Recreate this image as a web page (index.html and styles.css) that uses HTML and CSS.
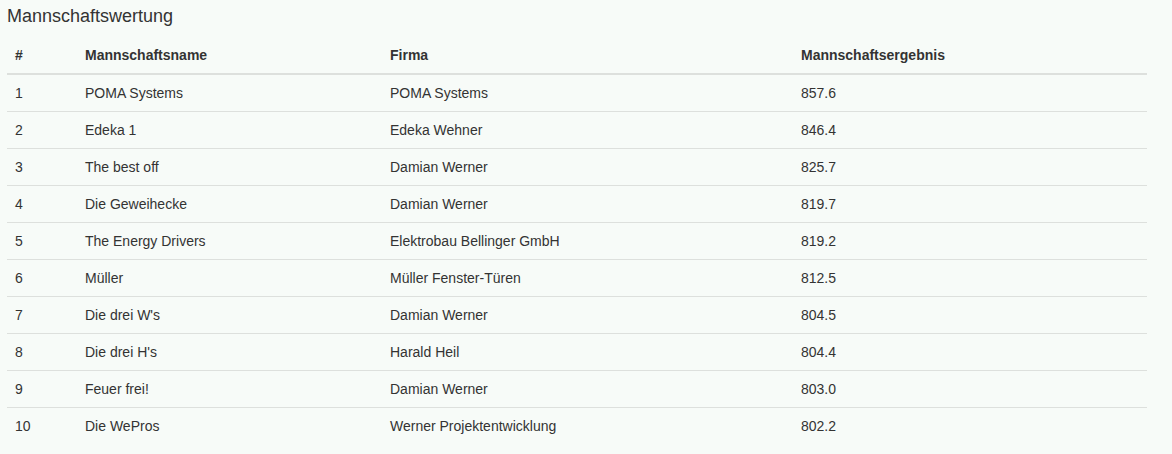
FILE: index.html
```html
<!DOCTYPE html>
<html lang="de">
<head>
<meta charset="utf-8">
<title>Mannschaftswertung</title>
<link rel="stylesheet" href="styles.css">
</head>
<body>
<div class="page">
  <h4 class="title">Mannschaftswertung</h4>
  <table class="table">
    <colgroup>
      <col class="c-rank"><col class="c-name"><col class="c-firm"><col class="c-score">
    </colgroup>
    <thead>
      <tr><th>#</th><th>Mannschaftsname</th><th>Firma</th><th>Mannschaftsergebnis</th></tr>
    </thead>
    <tbody>
      <tr><td>1</td><td>POMA Systems</td><td>POMA Systems</td><td>857.6</td></tr>
      <tr><td>2</td><td>Edeka 1</td><td>Edeka Wehner</td><td>846.4</td></tr>
      <tr><td>3</td><td>The best off</td><td>Damian Werner</td><td>825.7</td></tr>
      <tr><td>4</td><td>Die Geweihecke</td><td>Damian Werner</td><td>819.7</td></tr>
      <tr><td>5</td><td>The Energy Drivers</td><td>Elektrobau Bellinger GmbH</td><td>819.2</td></tr>
      <tr><td>6</td><td>Müller</td><td>Müller Fenster-Türen</td><td>812.5</td></tr>
      <tr><td>7</td><td>Die drei W's</td><td>Damian Werner</td><td>804.5</td></tr>
      <tr><td>8</td><td>Die drei H's</td><td>Harald Heil</td><td>804.4</td></tr>
      <tr><td>9</td><td>Feuer frei!</td><td>Damian Werner</td><td>803.0</td></tr>
      <tr><td>10</td><td>Die WePros</td><td>Werner Projektentwicklung</td><td>802.2</td></tr>
    </tbody>
  </table>
</div>
</body>
</html>
```
FILE: styles.css
```css
html, body {
  margin: 0;
  padding: 0;
  background: #f7fbf8;
}
body {
  font-family: "Liberation Sans", Arial, Helvetica, sans-serif;
  font-size: 14px;
  line-height: 20px;
  color: #333;
}
.page {
  padding: 0 25px 0 7px;
}
.title {
  margin: 6px 0 11px;
  font-size: 18px;
  line-height: 20px;
  font-weight: 400;
  color: #333;
}
.table {
  width: 1140px;
  border-collapse: collapse;
  border-spacing: 0;
}
.c-rank { width: 70px; }
.c-name { width: 305px; }
.c-firm { width: 411px; }
.c-score { width: 354px; }
.table th,
.table td {
  padding: 8px;
  text-align: left;
  vertical-align: top;
}
.table th {
  font-weight: 700;
  border-bottom: 2px solid #dde0dd;
}
.table td {
  border-top: 1px solid #dde0dd;
}
.table tbody tr:first-child td {
  border-top: 0;
}
```
